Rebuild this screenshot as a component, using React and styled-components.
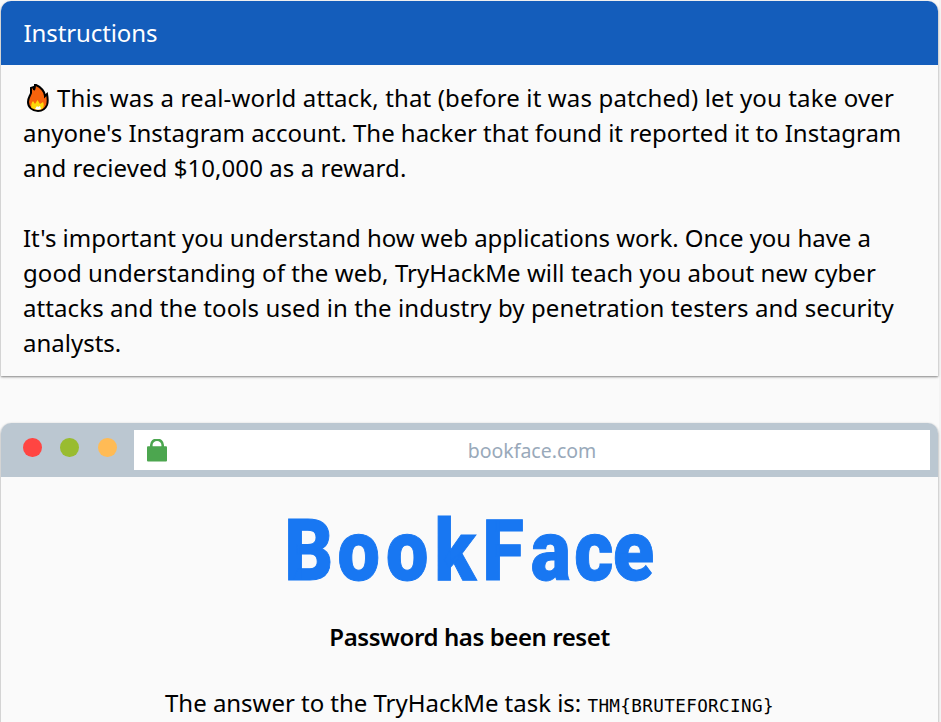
import React from 'react';
import styled, { createGlobalStyle } from 'styled-components';

const GlobalStyle = createGlobalStyle`
  * { box-sizing: border-box; }
  body {
    margin: 0;
    background: #fafafa;
    color: #000;
    font-family: "Noto Sans", sans-serif;
    overflow: hidden;
  }
`;

const Page = styled.main`
  height: 722px;
  overflow: hidden;
  padding: 1px 3px 0 1px;
  display: flex;
  flex-direction: column;
  gap: 47px;
  box-shadow: inset -2px 0 #f4f4f4;
`;

const Card = styled.section`
  flex: none;
  height: ${(p) => p.$height}px;
  background: #fafafa;
  border-radius: 10px 10px 0 0;
  box-shadow: 0 1px 3px rgba(0, 0, 0, 0.22), 0 1px 2px rgba(0, 0, 0, 0.3);
`;

const CardHeader = styled.header`
  height: 64px;
  padding: 0 22.5px;
  border-radius: 10px 10px 0 0;
  background: #145dbb;
  color: #fff;
  font-size: 24px;
  line-height: 63px;
  letter-spacing: -0.1px;
`;

const CardBody = styled.div`
  padding: 15px 22px 0;
  font-size: 24px;
  line-height: 35px;
`;

const Paragraph = styled.p`
  margin: 0 0 35px;
`;

const Line = styled.span`
  display: flex;
  align-items: center;
  height: 35px;
  white-space: pre;
  letter-spacing: ${(p) => p.$spacing || 0}px;
`;

const Flame = styled.svg`
  flex: none;
  width: 22px;
  height: 28px;
  margin: 0 8px 0 4px;
`;

const BrowserBar = styled.header`
  height: 54px;
  padding: 7px 8px 7px 21.5px;
  border-radius: 10px 10px 0 0;
  background: #bbc7d1;
  display: flex;
`;

const Lights = styled.div`
  display: flex;
  gap: 18.5px;
  width: 111.5px;
  padding-top: 7.7px;
`;

const Light = styled.span`
  width: 19px;
  height: 19.5px;
  border-radius: 50%;
  background: ${(p) => p.$color};
`;

const AddressField = styled.div`
  flex: 1;
  height: 40px;
  padding: 0 13px;
  background: #fff;
  display: grid;
  grid-template-columns: 20px 1fr 20px;
  align-items: center;
`;

const Lock = styled.svg`
  width: 20px;
  height: 24px;
`;

const Address = styled.span`
  text-align: center;
  color: #99a9ba;
  font-size: 19.5px;
  line-height: 40px;
  padding-top: 1px;
`;

const Site = styled.div`
  display: flex;
  flex-direction: column;
  align-items: center;
`;

const Logo = styled.svg`
  width: 380px;
  height: 80px;
  margin-top: 30px;
  overflow: visible;
  fill: #1877f2;
  stroke: #1877f2;
  stroke-width: 1px;
  font-family: Roboto, sans-serif;
  font-size: 85.6px;
  font-weight: 900;
`;

const Heading = styled.h1`
  margin: 32px 0 0;
  font-size: 24px;
  font-weight: 600;
  line-height: 35px;
  letter-spacing: -0.42px;
`;

const Answer = styled.p`
  margin: 31px 0 0;
  font-size: 24px;
  line-height: 35px;
  letter-spacing: -0.03px;
  white-space: nowrap;
`;

const Flag = styled.code`
  font-family: "DejaVu Sans Mono", monospace;
  font-size: 17.6px;
  letter-spacing: 0.38px;
`;

export default function App() {
  return (
    <>
      <GlobalStyle />
      <Page>
        <Card $height={375}>
          <CardHeader>Instructions</CardHeader>
          <CardBody>
            <Paragraph>
              <Line $spacing={0.14}>
                <Flame viewBox="0 0 22 28">
                  <path
                    d="M9 1 C14 3 18 8 18 12 L20 10 C21 15 21 18 20 21 C18 26 15 27 11 27 C5 27 1 23 1 18 C1 14 3 12 4 9 L4 4 L7 3 L7 6 C8 4 8 3 8 1 Z"
                    fill="#f7630c"
                    stroke="#000"
                    strokeWidth="2"
                  />
                  <path d="M4.5 24 Q3.5 20 6 17 L8 20 L10.5 16 L13 20 L16 18 Q18 22 15 25 Q11 27 4.5 24Z" fill="#fdd90a" />
                  <path d="M8 25 L10 22 L11 23 L13 22 L14 25 Q11 26.5 8 25Z" fill="#fff" />
                </Flame>
                This was a real-world attack, that (before it was patched) let you take over
              </Line>
              <Line $spacing={-0.02}>anyone's Instagram account. The hacker that found it reported it to Instagram</Line>
              <Line $spacing={0.07}>and recieved $10,000 as a reward.</Line>
            </Paragraph>
            <Paragraph>
              <Line $spacing={-0.02}>It's important you understand how web applications work. Once you have a</Line>
              <Line $spacing={0.06}>good understanding of the web, TryHackMe will teach you about new cyber</Line>
              <Line $spacing={0.09}>attacks and the tools used in the industry by penetration testers and security</Line>
              <Line>analysts.</Line>
            </Paragraph>
          </CardBody>
        </Card>
        <Card $height={320}>
          <BrowserBar>
            <Lights>
              <Light $color="#ff4542" />
              <Light $color="#99bc30" />
              <Light $color="#ffbb55" />
            </Lights>
            <AddressField>
              <Lock viewBox="0 0 20 24">
                <path d="M4.3 8 V6 a5.7 5.3 0 0 1 11.4 0 V8" fill="none" stroke="#4ca64f" strokeWidth="2.6" />
                <rect y="7.3" width="20" height="15.3" rx="1" fill="#4ca64f" />
              </Lock>
              <Address>bookface.com</Address>
            </AddressField>
          </BrowserBar>
          <Site>
            <Logo viewBox="0 0 380 80">
              <text transform="scale(0.88 1)" y="72.8" x="5 65.3 120.5 175.5 230 285 334.3 378.3">BookFace</text>
            </Logo>
            <Heading>Password has been reset</Heading>
            <Answer>
              The answer to the TryHackMe task is: <Flag>{'THM{BRUTEFORCING}'}</Flag>
            </Answer>
          </Site>
        </Card>
      </Page>
    </>
  );
}
